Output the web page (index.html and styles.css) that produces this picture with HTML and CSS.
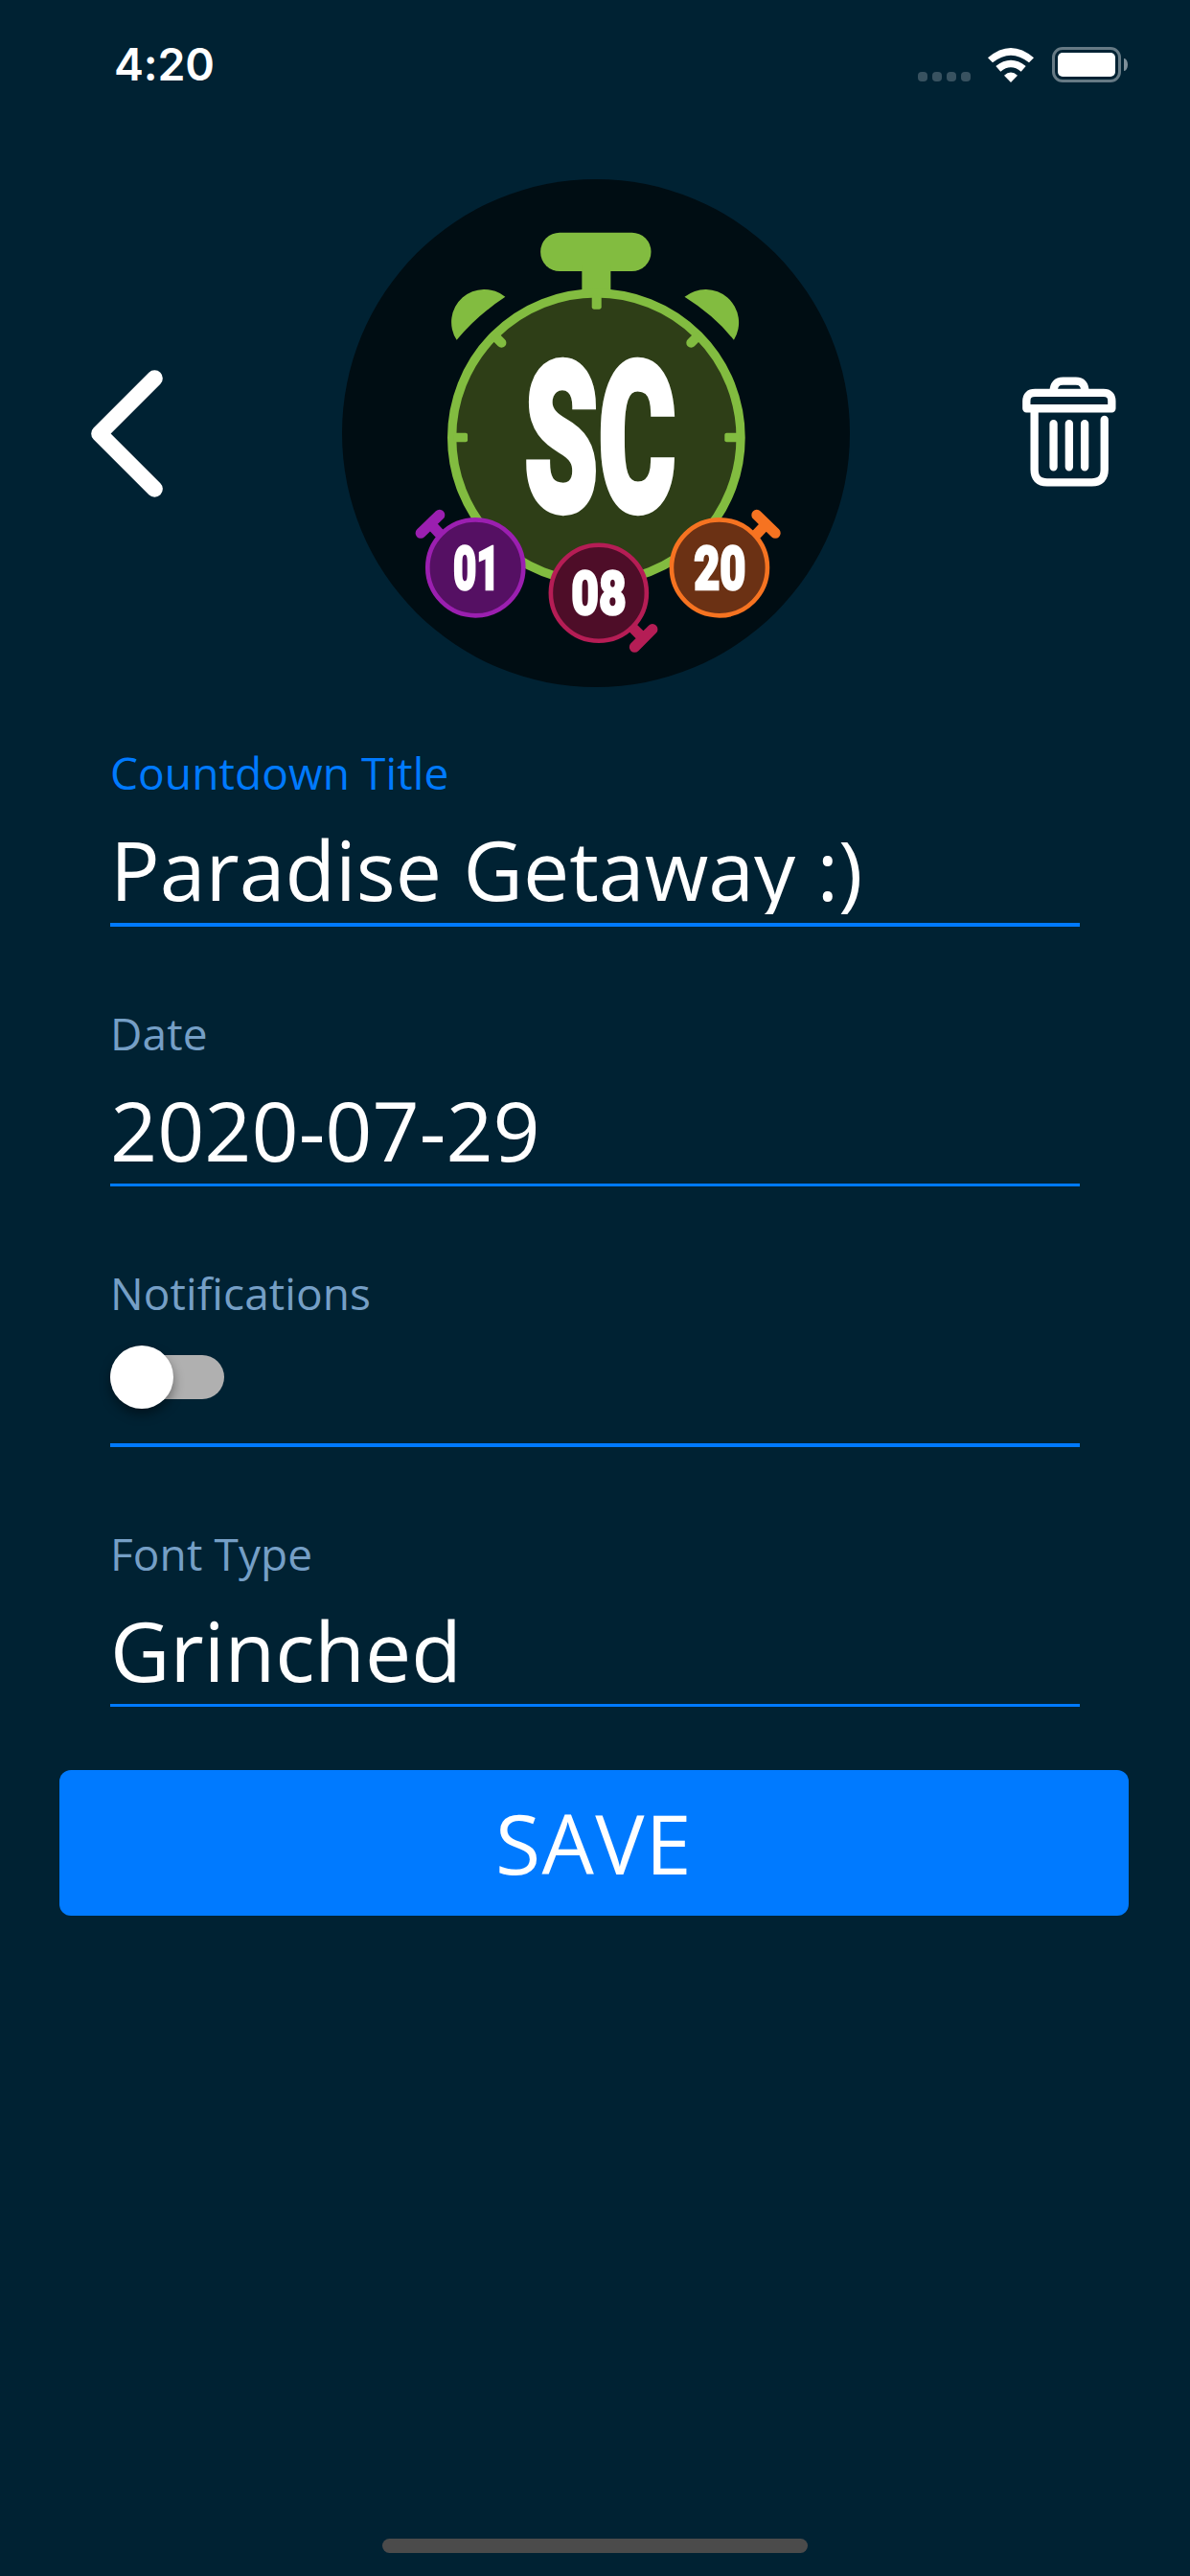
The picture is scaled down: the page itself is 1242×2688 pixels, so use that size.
FILE: index.html
```html
<!DOCTYPE html>
<html lang="en">
<head>
  <meta charset="UTF-8" />
  <meta name="viewport" content="width=device-width, initial-scale=1.0"/>
  <title>Edit Countdown</title>
  <link rel="stylesheet" href="styles.css">
</head>
<body>
  <div class="status-bar">
    <span class="time">4:20</span>
    <div class="status-icons">
      <div class="cell-dots"><i></i><i></i><i></i><i></i></div>
      <svg class="wifi" viewBox="0 0 144 108">
        <path d="M0 31 Q72 -31 144 31 L129 46 Q72 0 15 46 Z" />
        <path d="M25 57 Q72 19 119 57 L104 74 Q72 48 40 74 Z" />
        <path d="M51 86 Q72 67 93 86 L72 108 Z" />
      </svg>
      <div class="battery"><div class="battery-fill"></div></div>
      <div class="battery-nub"></div>
    </div>
  </div>

  <header class="header">
    <button class="icon-button">
      <svg class="back-icon" viewBox="75 77 226 400">
        <path d="M275 103 L101 277 L275 451" />
      </svg>
    </button>

    <svg class="logo" viewBox="47 48 1484 1484">
      <circle cx="789" cy="790" r="742" fill="#000d13" />

      <!-- main stopwatch -->
      <g fill="#82bc40">
        <rect x="627" y="204" width="323" height="113" rx="56" />
        <rect x="748" y="300" width="84" height="85" />
        <path d="M382 518 A96 96 0 0 1 524 392 Q440 447 382 518 Z" />
        <path d="M1192 518 A97 97 0 0 0 1048 392 Q1136 447 1192 518 Z" />
      </g>
      <circle cx="790" cy="803" r="422" fill="#2e3e17" stroke="#82bc40" stroke-width="26" />
      <g fill="#82bc40">
        <rect x="777" y="385" width="28" height="43" rx="6" />
        <rect x="372" y="789" width="42" height="27" rx="6" />
        <rect x="1165" y="789" width="42" height="27" rx="6" />
      </g>
      <path d="M495 508 L513 526 M1085 508 L1067 526" stroke="#82bc40" stroke-width="28" stroke-linecap="round" />
      <text class="logo-text" transform="translate(580 1018) scale(.52 1)" x="0" y="0" font-size="606" stroke-width="18" textLength="850" lengthAdjust="spacingAndGlyphs">SC</text>

      <!-- small stopwatches -->
      <g fill="#551063" stroke="#9b1fb0">
        <path d="M277 1082 L332 1029 M310 1060 L335 1087" stroke-width="31" stroke-linecap="round" />
        <circle cx="437" cy="1183" r="140" stroke-width="13" />
      </g>
      <g fill="#6b3114" stroke="#f67321">
        <path d="M1259 1029 L1313 1082 M1282 1060 L1257 1087" stroke-width="31" stroke-linecap="round" />
        <circle cx="1150" cy="1183" r="140" stroke-width="13" />
      </g>
      <g fill="#4e0d28" stroke="#b51d55">
        <path d="M902 1415 L954 1363 M925 1387 L898 1360" stroke-width="31" stroke-linecap="round" />
        <circle cx="797" cy="1257" r="140" stroke-width="13" />
      </g>
      <g class="logo-text" font-size="178" stroke-width="7">
        <text x="372" y="1247" textLength="136" lengthAdjust="spacingAndGlyphs">01</text>
        <text x="717" y="1319" textLength="161" lengthAdjust="spacingAndGlyphs">08</text>
        <text x="1075" y="1247" textLength="152" lengthAdjust="spacingAndGlyphs">20</text>
      </g>
    </svg>

    <button class="icon-button delete">
      <svg class="trash-icon" viewBox="80 68 295 346">
        <path d="M93 168 V145 Q93 119 120 119 H335 Q361 119 361 145 V168 Z" />
        <path d="M178 115 Q178 82 208 82 H248 Q277 82 277 115" />
        <path d="M118 175 V360 Q118 400 158 400 H298 Q338 400 338 360 V203" />
        <path d="M178 216 V352 M227 216 V352 M276 216 V352" />
      </svg>
    </button>
  </header>

  <main class="form">
    <div class="field active">
      <div class="label">Countdown Title</div>
      <div class="value">Paradise Getaway :)</div>
    </div>
    <div class="field">
      <div class="label">Date</div>
      <div class="value">2020-07-29</div>
    </div>
    <div class="field toggle">
      <div class="label">Notifications</div>
      <div class="switch"><div class="thumb"></div></div>
    </div>
    <div class="field">
      <div class="label">Font Type</div>
      <div class="value">Grinched</div>
    </div>
  </main>

  <button class="save-button">SAVE</button>

  <div class="home-indicator"></div>
</body>
</html>
```
FILE: styles.css
```css
* { margin: 0; padding: 0; box-sizing: border-box; }

body {
  width: 1242px;
  height: 2688px;
  display: flex;
  flex-direction: column;
  background: #002233;
  color: white;
  font-family: "Open Sans", "Noto Sans", sans-serif;
  overflow: hidden;
}

button { background: none; border: none; color: inherit; font-family: inherit; cursor: pointer; }
svg { display: block; }

.status-bar {
  height: 132px;
  padding: 49px 65px 0 119px;
  display: flex;
  justify-content: space-between;
  align-items: flex-start;
}
.time {
  font-family: Inter, sans-serif;
  font-size: 46.5px;
  font-weight: 600;
  line-height: 37px;
  letter-spacing: -.2px;
}
.status-icons { display: flex; align-items: center; height: 37px; }
.cell-dots { display: flex; gap: 5px; align-self: flex-end; margin: 0 18px 1px 0; }
.cell-dots i { width: 10px; height: 10px; border-radius: 4px; background: #385260; }
.wifi { width: 48px; height: 36px; fill: white; margin-right: 19px; }
.battery {
  width: 72px; height: 37px;
  padding: 3px;
  border: 3px solid #667a85;
  border-radius: 11px;
}
.battery-fill { height: 25px; border-radius: 5px; background: white; }
.battery-nub { width: 4px; height: 13px; margin-left: 3px; border-radius: 0 4px 4px 0 / 0 7px 7px 0; background: #7f909a; }

.header {
  height: 586px;
  padding: 55px 77px 0 95px;
  display: flex;
  justify-content: space-between;
  align-items: flex-start;
}
.icon-button { height: 530px; display: flex; align-items: center; }
.icon-button.delete { padding-bottom: 4px; }
.back-icon { width: 75px; height: 133px; }
.back-icon path { fill: none; stroke: white; stroke-width: 51; stroke-linecap: round; stroke-linejoin: round; }
.trash-icon { width: 98px; height: 115px; }
.trash-icon path { fill: none; stroke: white; stroke-width: 25; stroke-linecap: round; stroke-linejoin: round; }
.logo { width: 530px; height: 530px; margin-left: 86px; margin-right: 79px; }
.logo-text { font-family: Roboto, sans-serif; font-weight: 900; fill: white; stroke: white; }

.form {
  padding: 0 115px;
  display: grid;
  grid-template-rows: 249px 271px 272px 271px;
}
.field { border-bottom: 3px solid #007aff; padding-top: 53px; }
.field.active { border-bottom-width: 4px; padding-top: 30px; }
.field.toggle { border-bottom-width: 4px; }
.label {
  height: 101px;
  padding-top: 27px;
  font-size: 46px;
  line-height: 62px;
  letter-spacing: .1px;
  color: #759fc6;
}
.active .label { color: #007aff; }
.value { font-size: 86px; line-height: 116px; height: 110px; white-space: nowrap; }
/* single line input, descenders get cut */
.active .value { height: 105px; overflow: hidden; }

.switch {
  width: 119px; height: 46px;
  margin-top: 22px;
  border-radius: 23px;
  background: #b0b0b0;
  display: flex;
  align-items: center;
}
.thumb { width: 66px; height: 66px; flex: none; border-radius: 50%; background: white; box-shadow: 0 6px 12px rgba(0, 0, 0, .4); }

.save-button {
  height: 152px;
  margin: 66px 64px 0 62px;
  border-radius: 12px;
  background: #007aff;
  font-size: 86px;
  line-height: 152px;
  letter-spacing: 1.3px;
}

.home-indicator { width: 444px; height: 15px; margin: auto auto 24px; border-radius: 8px; background: #4b4b4b; }
```
